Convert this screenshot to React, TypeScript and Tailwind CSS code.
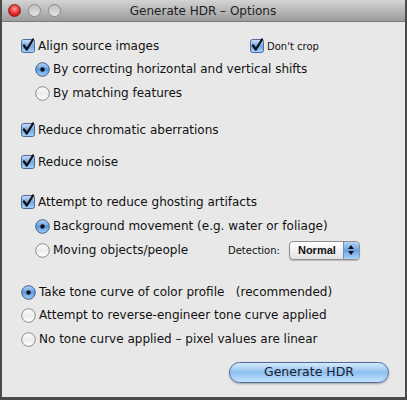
import React from 'react';

const font = { fontFamily: '"DejaVu Sans", "Lucida Grande", sans-serif' };

function CheckBox() {
  return (
    <svg width="14" height="14" viewBox="0 0 14 14" className="shrink-0 overflow-visible">
      <defs>
        <linearGradient id="cbg" x1="0" y1="0" x2="0" y2="1">
          <stop offset="0" stopColor="#cfe3fb" />
          <stop offset="0.5" stopColor="#6fa6e4" />
          <stop offset="1" stopColor="#a9d2fb" />
        </linearGradient>
      </defs>
      <rect x="0.5" y="0.5" width="13" height="13" rx="2" fill="url(#cbg)" stroke="#4c6a9a" />
      <path d="M3 6.5 L5.8 10.5 L12 0.5" fill="none" stroke="#111" strokeWidth="2.3" strokeLinecap="round" strokeLinejoin="round" />
    </svg>
  );
}

function Radio({ on }: { on?: boolean }) {
  return (
    <svg width="15" height="15" viewBox="0 0 15 15" className="shrink-0">
      <defs>
        <linearGradient id="rOn" x1="0" y1="0" x2="0" y2="1">
          <stop offset="0" stopColor="#bcd8f7" />
          <stop offset="0.5" stopColor="#5c9ae0" />
          <stop offset="1" stopColor="#a4d0fb" />
        </linearGradient>
        <linearGradient id="rOff" x1="0" y1="0" x2="0" y2="1">
          <stop offset="0" stopColor="#fdfdfd" />
          <stop offset="0.5" stopColor="#ececec" />
          <stop offset="1" stopColor="#ffffff" />
        </linearGradient>
      </defs>
      <circle cx="7.5" cy="7.5" r="6.8" fill={on ? 'url(#rOn)' : 'url(#rOff)'} stroke={on ? '#3f5e8c' : '#8a8a8a'} />
      {on && <circle cx="7.5" cy="7.5" r="2.2" fill="#111" />}
    </svg>
  );
}

function Row({ children, className }: { children: React.ReactNode; className: string }) {
  return <div className={`flex h-[20px] items-center gap-[3px] text-[12px] text-[#111] ${className}`}>{children}</div>;
}

export default function App() {
  return (
    <div className="flex h-[400px] w-[407px] flex-col overflow-hidden border-x-[2px] border-b-[3px] border-[#4a4a4a] bg-[#e8e8e8]" style={font}>
      {/* title bar */}
      <div className="flex h-[22px] shrink-0 items-center border-b border-[#7a7a7a] bg-gradient-to-b from-[#d4d4d4] to-[#9c9c9c] px-[6px]">
        <div className="flex gap-[7px]">
          <span className="h-[13px] w-[13px] rounded-full border border-[#8a2020] bg-[radial-gradient(circle_at_50%_35%,#ff9a9a,#e02020_60%,#a01010)]" />
          <span className="h-[13px] w-[13px] rounded-full border border-[#8c8c8c] bg-gradient-to-b from-[#c0c0c0] to-[#e4e4e4]" />
          <span className="h-[13px] w-[13px] rounded-full border border-[#8c8c8c] bg-gradient-to-b from-[#c0c0c0] to-[#e4e4e4]" />
        </div>
        <div className="flex-1 pr-[54px] text-center text-[12px] text-[#1e1e1e]">Generate HDR – Options</div>
      </div>

      <div className="flex flex-col pl-[19px]">
        <Row className="mt-[14px]">
          <CheckBox />
          <span className="w-[209px]">Align source images</span>
          <CheckBox />
          <span className="text-[10px]">Don't crop</span>
        </Row>
        <Row className="mt-[3px] pl-[14px]">
          <Radio on />
          <span>By correcting horizontal and vertical shifts</span>
        </Row>
        <Row className="mt-[4px] pl-[14px]">
          <Radio />
          <span>By matching features</span>
        </Row>

        <Row className="mt-[17px]">
          <CheckBox />
          <span>Reduce chromatic aberrations</span>
        </Row>
        <Row className="mt-[12px]">
          <CheckBox />
          <span>Reduce noise</span>
        </Row>

        <Row className="mt-[20px]">
          <CheckBox />
          <span>Attempt to reduce ghosting artifacts</span>
        </Row>
        <Row className="mt-[4px] pl-[14px]">
          <Radio on />
          <span>Background movement (e.g. water or foliage)</span>
        </Row>
        <Row className="mt-[4px] pl-[14px]">
          <Radio />
          <span className="w-[172px]">Moving objects/people</span>
          <span className="text-[10px]">Detection:</span>
          <div className="ml-[6px] flex h-[19px] w-[71px] items-center overflow-hidden rounded-[4px] border border-[#8f8f8f] bg-gradient-to-b from-[#ffffff] to-[#e2e2e2] shadow-[0_1px_1px_rgba(0,0,0,0.2)]">
            <span className="flex-1 pl-[8px] text-[11px] font-bold" style={{ fontFamily: '"Liberation Sans", Arial, sans-serif' }}>Normal</span>
            <div className="flex h-full w-[16px] flex-col items-center justify-center gap-[2px] border-l border-[#6a8ec4] bg-gradient-to-b from-[#b5d3f6] via-[#6aa2e6] to-[#a8d0fb]">
              <svg width="6" height="4" viewBox="0 0 6 4"><path d="M0 4 L3 0 L6 4Z" fill="#111" /></svg>
              <svg width="6" height="4" viewBox="0 0 6 4"><path d="M0 0 L3 4 L6 0Z" fill="#111" /></svg>
            </div>
          </div>
        </Row>

        <Row className="mt-[22px]">
          <Radio on />
          <span>Take tone curve of color profile&nbsp;&nbsp;&nbsp;(recommended)</span>
        </Row>
        <Row className="mt-[3px]">
          <Radio />
          <span>Attempt to reverse-engineer tone curve applied</span>
        </Row>
        <Row className="mt-[4px]">
          <Radio />
          <span>No tone curve applied – pixel values are linear</span>
        </Row>
      </div>

      <div className="mt-[13px] flex justify-end pr-[16px]">
        <button className="h-[21px] w-[160px] rounded-full border border-[#4d6a9e] bg-gradient-to-b from-[#d6e9fc] via-[#8ec0f0] to-[#c4e3ff] text-[12.5px] text-[#1a2230] shadow-[0_1px_2px_rgba(0,0,0,0.3)]">
          Generate HDR
        </button>
      </div>
    </div>
  );
}
